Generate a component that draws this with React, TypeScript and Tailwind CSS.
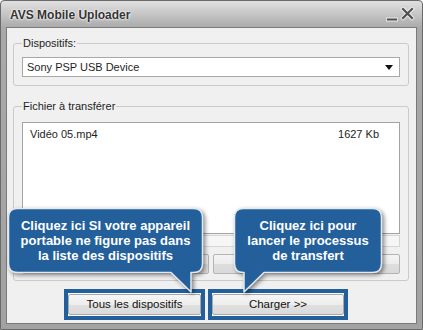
import React from "react";

const ui = { fontFamily: '"Liberation Sans", Arial, sans-serif' };

function Callouts() {
  return (
    <svg
      className="absolute left-0 top-0 pointer-events-none [filter:drop-shadow(2px_2px_2px_rgba(0,0,0,0.45))]"
      width={423}
      height={330}
      viewBox="0 0 423 330"
    >
      <path
        d="M 16.5 207.5 H 192.5 Q 201.5 207.5 201.5 216.5 V 262.5 Q 201.5 271.5 192.5 271.5 H 190 V 291 L 170 271.5 H 16.5 Q 7.5 271.5 7.5 262.5 V 216.5 Q 7.5 207.5 16.5 207.5 Z"
        fill="#23609b"
        stroke="#e3e9ef"
        strokeWidth={1.5}
        strokeLinejoin="round"
      />
      <path
        d="M 242.5 207.5 H 371.5 Q 380.5 207.5 380.5 216.5 V 262.5 Q 380.5 271.5 371.5 271.5 H 263 L 243 291 V 271.5 H 242.5 Q 233.5 271.5 233.5 262.5 V 216.5 Q 233.5 207.5 242.5 207.5 Z"
        fill="#23609b"
        stroke="#e3e9ef"
        strokeWidth={1.5}
        strokeLinejoin="round"
      />
    </svg>
  );
}

export default function App() {
  return (
    <div
      className="relative w-[423px] h-[330px] flex flex-col border border-[#6a6a6a] rounded-t-[4px] bg-[linear-gradient(to_bottom,#e0e0e0_0px,#a9a9a9_27px,#a2a2a2_100%)] overflow-hidden"
      style={ui}
    >
      {/* Title bar */}
      <div className="h-[26px] shrink-0 flex items-center justify-between pl-[9px] pr-[6px]">
        <span className="text-[12px] font-bold text-[#333] [text-shadow:0_0_3px_#fff,0_0_2px_#fff] pt-[2px]">
          AVS Mobile Uploader
        </span>
        <svg width="30" height="16" viewBox="0 0 30 16" className="mt-[2px]">
          <g stroke="#fff" strokeWidth="4" strokeLinecap="square" opacity="0.7">
            <path d="M2 12.5 H10" />
            <path d="M17 2 L26 11 M26 2 L17 11" />
          </g>
          <g stroke="#505050" strokeWidth="2.2" strokeLinecap="square">
            <path d="M2 12.5 H10" />
            <path d="M17 2 L26 11 M26 2 L17 11" />
          </g>
        </svg>
      </div>

      {/* Body */}
      <div className="flex-1 mx-[5px] mb-[5px] border border-[#7a7a7a] bg-[#f0f0f0] pl-[6px] pr-[7px] pt-[8px] flex flex-col text-[11px] text-[#1e1e1e]">
        <fieldset className="border border-[#cacaca] rounded-[3px] px-[8px] pt-[7px] pb-[8px]">
          <legend className="px-px leading-[14px] text-[11px]">Dispositifs:</legend>
          <div className="h-[20px] bg-white border border-[#a8a8a8] flex items-center justify-between pl-[4px] pr-[6px]">
            <span>Sony PSP USB Device</span>
            <svg width="8" height="5" viewBox="0 0 8 5">
              <path d="M0 0 H8 L4 5 Z" fill="#111" />
            </svg>
          </div>
        </fieldset>

        <fieldset className="mt-[13px] border border-[#cacaca] rounded-[3px] px-[8px] pt-[9px] pb-[6px]">
          <legend className="px-px leading-[14px] text-[11px]">Fichier à transférer</legend>
          <div className="h-[112px] bg-white border border-[#a3a3a3] pt-[4px] pl-[7px] pr-[20px]">
            <div className="flex justify-between leading-[14px]">
              <span>Vidéo 05.mp4</span>
              <span>1627 Kb</span>
            </div>
          </div>
          <div className="mt-px h-[12px] border border-[#d6d6d6] bg-[#f6f6f6]" />
          <div className="mt-[7px] flex gap-[4px]">
            <div className="flex-1 h-[20px] border border-[#b4b4b4] rounded-[2px] bg-[linear-gradient(to_bottom,#f4f4f4_0%,#ececec_50%,#dedede_51%,#d9d9d9_100%)]" />
            <div className="flex-1 h-[20px] border border-[#b4b4b4] rounded-[2px] bg-[linear-gradient(to_bottom,#f4f4f4_0%,#ececec_50%,#dedede_51%,#d9d9d9_100%)]" />
          </div>
        </fieldset>

        <div className="mt-[8px] ml-[51px] flex gap-[3px]">
          <div className="w-[141px] h-[31px] border-4 border-[#23609b] bg-white pt-px">
            <div className="h-[21px] border border-[#a9a9a9] rounded-[2px] bg-[linear-gradient(to_bottom,#f6f6f6_0%,#ededed_50%,#e0e0e0_51%,#dadada_100%)] flex items-center justify-center text-[11.5px] text-[#111]">
              Tous les dispositifs
            </div>
          </div>
          <div className="w-[140px] h-[31px] border-4 border-[#23609b] bg-white pt-px">
            <div className="h-[21px] border border-[#a9a9a9] rounded-[2px] bg-[linear-gradient(to_bottom,#f6f6f6_0%,#ededed_50%,#e0e0e0_51%,#dadada_100%)] flex items-center justify-center text-[11.5px] text-[#111]">
              Charger &gt;&gt;
            </div>
          </div>
        </div>
      </div>

      <Callouts />

      <div className="absolute left-[8px] top-[217px] w-[193px] text-center text-white font-bold text-[13px] leading-[15px]">
        Cliquez ici SI votre appareil
        <br />
        portable ne figure pas dans
        <br />
        la liste des dispositifs
      </div>
      <div className="absolute left-[234px] top-[217px] w-[146px] text-center text-white font-bold text-[13px] leading-[15px]">
        Cliquez ici pour
        <br />
        lancer le processus
        <br />
        de transfert
      </div>
    </div>
  );
}
